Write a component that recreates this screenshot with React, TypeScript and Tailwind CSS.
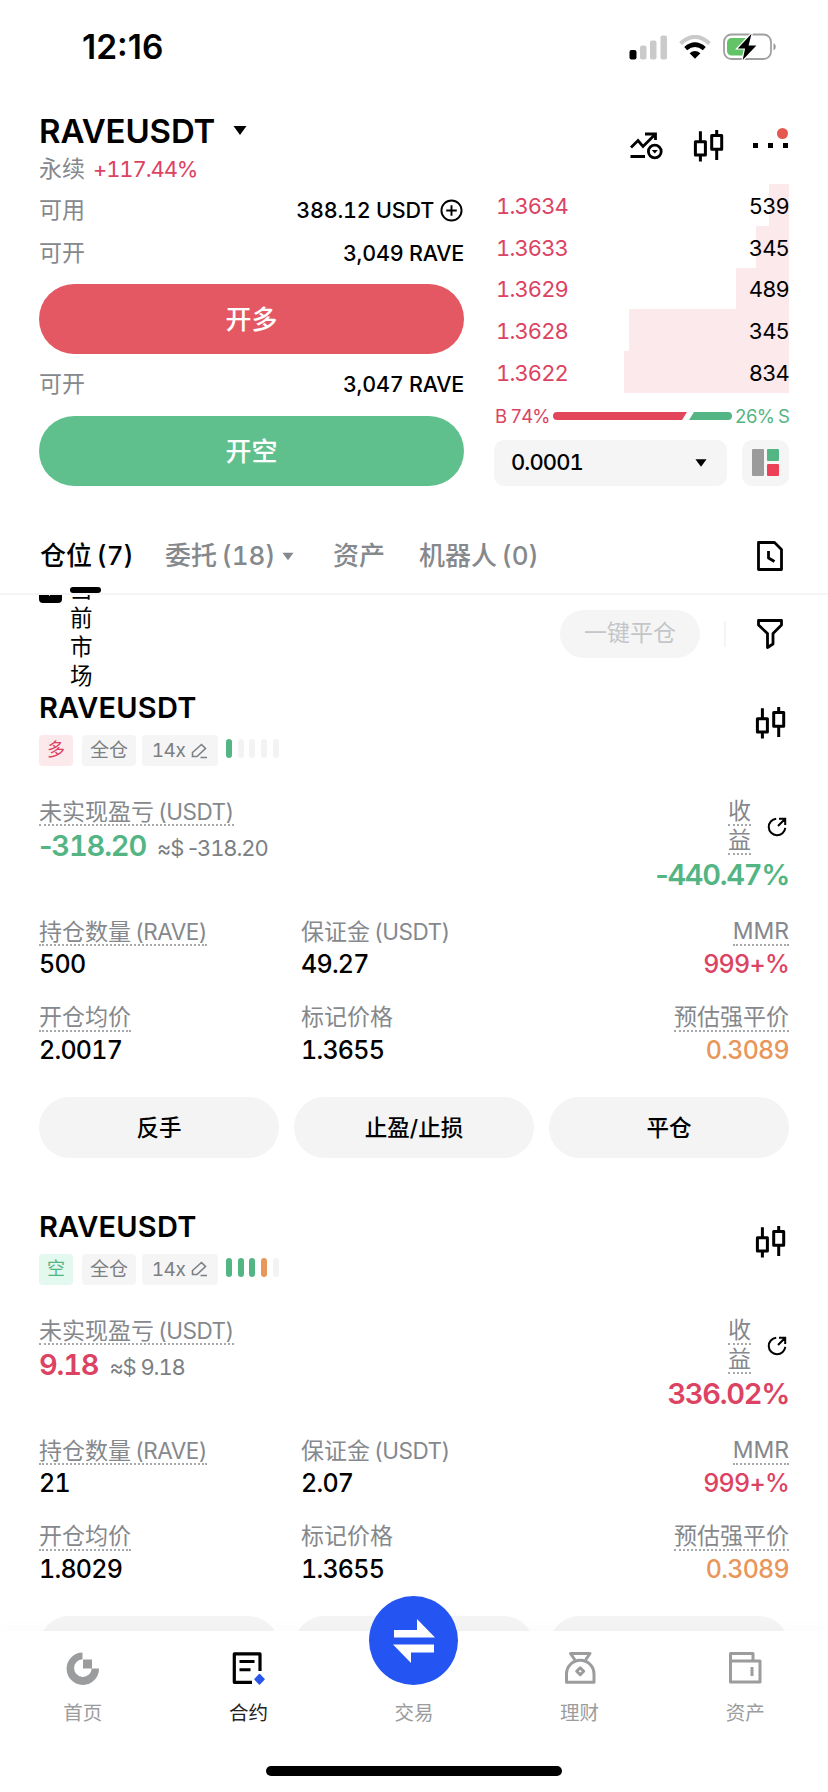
import React from 'react';
import clsx from 'clsx';

interface Position {
    side: 'long' | 'short';
    risk: string[];
    pnl: string;
    roi: string;
    size: string;
    margin: string;
    entry: string;
}

const positions: Position[] = [
    {
        side: 'long',
        risk: ['bg-[#54b584]', 'bg-[#f3f3f4]', 'bg-[#f3f3f4]', 'bg-[#f3f3f4]', 'bg-[#f3f3f4]'],
        pnl: '-318.20', roi: '-440.47%', size: '500', margin: '49.27', entry: '2.0017',
    },
    {
        side: 'short',
        risk: ['bg-[#54b584]', 'bg-[#54b584]', 'bg-[#54b584]', 'bg-[#e9965a]', 'bg-[#f3f3f4]'],
        pnl: '9.18', roi: '336.02%', size: '21', margin: '2.07', entry: '1.8029',
    },
];

const asks = [
    { price: '1.3634', qty: '539', depth: 20 },
    { price: '1.3633', qty: '345', depth: 33 },
    { price: '1.3629', qty: '489', depth: 53 },
    { price: '1.3628', qty: '345', depth: 160 },
    { price: '1.3622', qty: '834', depth: 165 },
];

const Caret = ({ className }: { className?: string }) => (
    <svg viewBox="0 0 14 9" className={className} fill="currentColor"><path d="M0.5 0h13L7 9z" /></svg>
);

const CandleIcon = () => (
    <svg width="32" height="32" viewBox="0 0 32 32" fill="none" stroke="#000" strokeWidth="3" strokeLinejoin="round">
        <rect x="2.4" y="11.8" width="10" height="13.2" />
        <path d="M7.4 1.3v10.500M7.400 25v6.500" />
        <rect x="18.7" y="5.5" width="10" height="13.8" />
        <path d="M23.700 0v5.500M23.700 19.300V30" />
    </svg>
);

// Inter's tabular minus is as wide as a digit, so the sign keeps its own width
const Signed = ({ value }: { value: string }) => (
    value.startsWith('-')
        ? <><span className="proportional-nums">-</span>{value.slice(1)}</>
        : <>{value}</>
);

const StatusBar = () => (
    <div className="h-[94px] pl-[82px] pr-[51px] flex items-center justify-between">
        <span className="pt-[2px] text-[33.5px] leading-none font-semibold proportional-nums">12:16</span>
        <div className="flex items-center">
            <svg width="39" height="26" viewBox="0 0 39 26">
                <rect x="0.5" y="16" width="7" height="9.5" rx="2" fill="#000" />
                <rect x="11" y="11.5" width="6.5" height="14" rx="2" fill="#cacaca" />
                <rect x="21" y="6.5" width="6.5" height="19" rx="2" fill="#cacaca" />
                <rect x="31.5" y="1.5" width="6.5" height="24" rx="2" fill="#cacaca" />
            </svg>
            <svg width="32" height="24" viewBox="0 0 32 24" className="ml-[11px]" fill="none">
                <path d="M1.5 8.4Q16 -4.6 30.5 8.4" stroke="#cacaca" strokeWidth="4" />
                <path d="M6.7 13.6Q16 5.6 25.3 13.6" stroke="#000" strokeWidth="4.4" />
                <path d="M10.6 18.2Q16 13.6 21.4 18.2L16 23.7z" fill="#000" />
            </svg>
            <svg width="54" height="28" viewBox="0 0 54 28" className="ml-[12px]">
                <rect x="1" y="1.5" width="47" height="24.5" rx="7.5" fill="#fff" stroke="#a0a0a0" strokeWidth="1.8" />
                <path d="M8.5 5H26v17.5H8.5a4.500 4.500 0 0 1-4.500-4.500V9.500A4.500 4.500 0 0 1 8.500 5z" fill="#62c466" />
                <path d="M50.500 10.300c3 1 3 6 0 7z" fill="#9a9a9a" />
                <path d="M28.500 0.800L14.800 15.400h7.300L19.700 27 33.400 12.400h-7.800z" fill="#000" stroke="#fff" strokeWidth="2.400" paintOrder="stroke" />
            </svg>
        </div>
    </div>
);

const Header = () => (
    <div className="h-[90px] pl-[39px] pr-[40px] flex justify-between">
        <div>
            <div className="h-[53px] pt-[20px] flex items-center">
                <h1 className="text-[33px] leading-[34px] font-semibold tracking-[-0.15px]">RAVEUSDT</h1>
                <Caret className="w-[14px] h-[9px] ml-[18px]" />
            </div>
            <div className="mt-[5px] h-[34px] flex items-center text-[23px] text-[#85888c]">
                <span>永续</span>
                <span className="ml-[8px] text-[22px] tracking-[-0.05em] text-[#dc4363]">+117.44%</span>
            </div>
        </div>
        <div className="flex items-start pt-[36px]">
            <svg width="34" height="30" viewBox="0 0 34 30" className="mt-px" fill="none" stroke="#000" strokeWidth="2.8">
                <path d="M2 16.5L9 9.5l5 6L26 3.5M16 3h10.5v6M1.5 25.5h14.5" />
                <circle cx="25.8" cy="20.5" r="6.4" />
                <path d="M22.8 19h6l-3 3.5z" fill="#000" stroke="none" />
            </svg>
            <div className="ml-[30px]"><CandleIcon /></div>
            <div className="relative ml-[28px] mt-[13px] w-[35px] h-[5px] flex justify-between">
                <i className="size-[5px] bg-black" />
                <i className="size-[5px] bg-black" />
                <i className="size-[5px] bg-black" />
                <i className="absolute -top-[15px] right-0 size-[11px] rounded-full bg-[#e4584f]" />
            </div>
        </div>
    </div>
);

const Row = ({ label, children }: { label: string; children: React.ReactNode }) => (
    <div className="flex items-center justify-between text-[23px] h-full">
        <span className="text-[#85888c]">{label}</span>
        <span className="flex items-center text-[21.5px] font-medium tracking-[-0.2px]">{children}</span>
    </div>
);

const OrderPanel = () => (
    <div className="w-[425px]">
        <div className="h-[47px] pt-[5px]">
            <Row label="可用">
                388.12 USDT
                <svg width="23" height="23" viewBox="0 0 24 24" className="ml-[6px] mr-px" fill="none" stroke="#000" strokeWidth="2">
                    <circle cx="12" cy="12" r="10.5" />
                    <path d="M12 6.5v11M6.5 12h11" />
                </svg>
            </Row>
        </div>
        <div className="h-[45px]"><Row label="可开">3,049 RAVE</Row></div>
        <button className="block mt-[8px] w-full h-[70px] rounded-full bg-[#e45863] text-white text-[26px] font-medium">开多</button>
        <div className="h-[62px] pb-px"><Row label="可开">3,047 RAVE</Row></div>
        <button className="block w-full h-[70px] rounded-full bg-[#60c08d] text-white text-[26px] font-medium">开空</button>
    </div>
);

const OrderBook = () => (
    <div className="w-[295px]">
        {asks.map(a => (
            <div key={a.price} className="h-[41.8px] pt-[3px] relative flex items-center justify-between text-[22px] tracking-[-0.04em]">
                <div className="absolute right-0 inset-y-0 bg-[#fbe9ec]" style={{ width: a.depth }} />
                <span className="ml-[2px] text-[#dc4363]">{a.price}</span>
                <span className="relative">{a.qty}</span>
            </div>
        ))}
        <div className="h-[47px] flex items-center text-[18.5px] tracking-[-0.05em]">
            <span className="ml-[1px] w-[58px] text-[#dc4363] whitespace-nowrap">B 74%</span>
            <svg width="179" height="8" viewBox="0 0 179 8">
                <path d="M4 0H134L129 8H4a4 4 0 0 1 0-8z" fill="#e3465a" />
                <path d="M141 0H175a4 4 0 0 1 0 8H136z" fill="#54b584" />
            </svg>
            <span className="flex-1 text-right text-[#54b584] whitespace-nowrap">26% S</span>
        </div>
        <div className="flex justify-between h-[46px]">
            <div className="w-[233px] rounded-[10px] bg-[#f5f5f5] flex items-center justify-between pl-[17px] pr-[20px]">
                <span className="text-[22px] font-medium tracking-[-0.04em]">0.0001</span>
                <Caret className="w-[12px] h-[8px]" />
            </div>
            <div className="w-[47px] rounded-[10px] bg-[#f5f5f5] flex items-center justify-center">
                <div className="flex gap-[3px] h-[27px]">
                    <div className="w-[12px] rounded-[1px] bg-[#9b9b9b]" />
                    <div className="w-[12px] flex flex-col gap-[3px]">
                        <div className="h-[12px] rounded-[1px] bg-[#54b584]" />
                        <div className="h-[12px] rounded-[1px] bg-[#ec4058]" />
                    </div>
                </div>
            </div>
        </div>
    </div>
);

const Tabs = () => (
    <div className="h-[74px] pl-[40px] pr-[44px] border-b-2 border-[#f5f5f5] flex items-start justify-between">
        <div className="flex text-[26px] leading-[38px] font-medium text-[#85888c] pt-[16px] whitespace-nowrap [word-spacing:-2.5px]">
            <div className="w-[125px] text-black">
                仓位 (7)
                <div className="relative top-[12px] ml-[30px] w-[31px] h-[6px] rounded-full bg-black z-10" />
            </div>
            <div className="w-[168px] flex items-center h-[38px]">委托 (18)<Caret className="ml-[6px] w-[12px] h-[9px]" /></div>
            <div className="w-[86px]">资产</div>
            <div>机器人 (0)</div>
        </div>
        <svg width="28" height="32" viewBox="0 0 28 32" className="mt-[19px]" fill="none" stroke="#000" strokeWidth="2.8" strokeLinejoin="round">
            <path d="M2.5 2.5H18.5L25.5 9.5V29.5H2.5z" />
            <path d="M12.5 11v7l6 3.5" />
        </svg>
    </div>
);

const Filters = () => (
    <div className="-mt-[21px] h-[119px] pl-[39px] pr-[44px] flex items-center">
        <div className="w-[23px] h-[23px] self-start mt-[6px] rounded-[4px] bg-black">
            <svg viewBox="0 0 23 23" fill="none" stroke="#fff" strokeWidth="2.5"><path d="M5 8l5.500 6L18 5" /></svg>
        </div>
        <div className="self-start ml-[8px] w-[23px] text-[22.5px] leading-[29px] break-all">当前市场</div>
        <button className="ml-auto w-[140px] h-[48px] rounded-full bg-[#f5f5f5] text-[23px] text-[#c3c5c8]">一键平仓</button>
        <div className="ml-[24px] w-[2px] h-[26px] bg-[#f5f5f5]" />
        <svg width="28" height="32" viewBox="0 0 28 32" className="ml-[30px]" fill="none" stroke="#000" strokeWidth="2.8" strokeLinejoin="round">
            <path d="M2.5 2.5h23v4.5l-8.5 8.5v10.5l-5.5 3.5v-14L2.5 7z" />
        </svg>
    </div>
);

const dotted = 'border-b-2 border-dotted border-[#a6a9ac]';

interface FieldLabelProps { text: string; unit?: string; underline?: boolean; }

const FieldLabel = ({ text, unit, underline }: FieldLabelProps) => (
    <div className={clsx('h-[27px] leading-[25px] text-[23px] text-[#85888c] whitespace-nowrap', underline && dotted)}>
        {text}
        {unit && <span className="ml-[4px] text-[22.5px] tracking-[-0.5px]">({unit})</span>}
    </div>
);

interface StatProps extends FieldLabelProps { value: string; right?: boolean; color?: string; }

const Stat = ({ value, right, color, ...label }: StatProps) => (
    <div className={clsx('h-[86px] flex flex-col', right ? 'items-end' : 'items-start')}>
        <FieldLabel {...label} />
        <div className={clsx('mt-[2px] h-[32px] leading-[32px] text-[25px] font-medium tracking-[-0.03em]', color)}>{value}</div>
    </div>
);

const PositionCard = ({ p }: { p: Position }) => {
    const tone = p.pnl.startsWith('-') ? 'text-[#54b584]' : 'text-[#dc4363]';
    return (
        <div className="h-[518.5px] px-[39px]">
            <div className="h-[109px] flex justify-between">
                <div>
                    <h2 className="h-[45px] leading-[36px] text-[29px] font-semibold tracking-[0.2px]">RAVEUSDT</h2>
                    <div className="flex text-[19px] h-[31px] leading-[31px] text-[#7c7f83]">
                        <span className={clsx('w-[34px] rounded-[4px] text-center text-[18px] leading-[29px]', p.side === 'long' ? 'bg-[#fce9ec] text-[#dc4363]' : 'bg-[#e3f8ee] text-[#54b584]')}>
                            {p.side === 'long' ? '多' : '空'}
                        </span>
                        <span className="ml-[9px] w-[54px] rounded-[4px] bg-[#f5f5f5] text-center">全仓</span>
                        <span className="ml-[6px] w-[76px] rounded-[4px] bg-[#f5f5f5] flex items-center justify-center tracking-[-0.5px]">
                            14x
                            <svg width="17" height="16" viewBox="0 0 17 16" className="ml-[6px]" fill="none" stroke="#7c7f83" strokeWidth="1.6">
                                <path d="M1.500 13.500V9.500L10.500 1.500l4 4L6 13.500zM9.500 14.500H16" />
                            </svg>
                        </span>
                        <span className="ml-[8px] mt-[4px] flex gap-[5.7px]">
                            {p.risk.map((c, i) => <i key={i} className={clsx('w-[6px] h-[19px] rounded-full', c)} />)}
                        </span>
                    </div>
                </div>
                <div className="mt-[17px] mr-[2px]"><CandleIcon /></div>
            </div>

            <div className="h-[120px] flex justify-between">
                <div className="flex flex-col items-start">
                    <FieldLabel text="未实现盈亏" unit="USDT" underline />
                    <div className="mt-px h-[38px] flex items-baseline leading-[38px]">
                        <span className={clsx('text-[29px] font-semibold tracking-[-0.04em]', tone)}><Signed value={p.pnl} /></span>
                        <span className="ml-[11px] text-[22px] tracking-[-0.05em] text-[#7c7f83]">≈$ <Signed value={p.pnl} /></span>
                    </div>
                </div>
                <div className="flex flex-col items-end">
                    <div className="flex items-center pr-[2px]">
                        <div className="w-[23px]">
                            <FieldLabel text="收" underline />
                            <div className="h-[2px]" />
                            <FieldLabel text="益" underline />
                        </div>
                        <svg width="20" height="20" viewBox="0 0 20 20" className="ml-[16px]" fill="none" stroke="#000" strokeWidth="2">
                            <path d="M9.2 1.7A8.3 8.3 0 1 0 18.3 10.8M12 1.8h6.2V8M18 2l-7 7" />
                        </svg>
                    </div>
                    <div className={clsx('mt-px h-[38px] leading-[38px] text-[29px] font-semibold tracking-[-0.045em]', tone)}><Signed value={p.roi} /></div>
                </div>
            </div>

            <div className="grid grid-cols-[262px_1fr_1fr]">
                <Stat text="持仓数量" unit="RAVE" value={p.size} underline />
                <Stat text="保证金" unit="USDT" value={p.margin} />
                <Stat text="MMR" value="999+%" underline right color="text-[#dc4363]" />
                <Stat text="开仓均价" value={p.entry} underline />
                <Stat text="标记价格" value="1.3655" />
                <Stat text="预估强平价" value="0.3089" underline right color="text-[#e9965a]" />
            </div>

            <div className="mt-[6px] grid grid-cols-3 gap-[15px]">
                {['反手', '止盈/止损', '平仓'].map(t => (
                    <button key={t} className="h-[61px] rounded-full bg-[#f4f4f4] text-[22.5px] font-medium">{t}</button>
                ))}
            </div>
        </div>
    );
};

const navItems = [
    {
        label: '首页',
        icon: (
            <svg width="34" height="34" viewBox="0 0 34 34">
                <path d="M16.500 1.500v6.800a8.800 8.800 0 1 0 9.200 9.200H33A16.200 16.200 0 1 1 16.500 1.500z" fill="#9b9c9e" />
                <rect x="17" y="8.5" width="9" height="9" fill="#9b9c9e" />
            </svg>
        ),
    },
    {
        label: '合约',
        icon: (
            <svg width="34" height="34" viewBox="0 0 34 34" fill="none" stroke="#000" strokeWidth="3.2">
                <path d="M29 20V2.9H3.3V31.3H21" strokeLinejoin="round" />
                <path d="M8.5 10.5h15M8.5 18.7h11" strokeWidth="3" />
                <path d="M28.5 23.500l4.500 4.700-4.500 4.700-4.500-4.700z" fill="#2a56ea" stroke="#2a56ea" strokeWidth="1.5" strokeLinejoin="round" />
            </svg>
        ),
    },
    { label: '交易', icon: null },
    {
        label: '理财',
        icon: (
            <svg width="34" height="34" viewBox="0 0 34 34" fill="none" stroke="#9b9c9e" strokeWidth="3" strokeLinejoin="round">
                <path d="M12 9L7.5 2.5H27L22.500 9" />
                <path d="M3.500 31.300V23A13.700 13.700 0 0 1 31 23V31.300z" />
                <path d="M17.200 16.800l3.500 3.500-3.500 3.500-3.500-3.500z" />
            </svg>
        ),
    },
    {
        label: '资产',
        icon: (
            <svg width="34" height="34" viewBox="0 0 34 34" fill="none" stroke="#9b9c9e" strokeWidth="3" strokeLinejoin="round">
                <path d="M2.5 10V2.5H25V10" />
                <path d="M2.5 10H32V31H2.5z" />
                <path d="M24 16v9" />
            </svg>
        ),
    },
];

const BottomNav = () => (
    <div className="relative h-[161px] bg-white shadow-[0_-4px_14px_rgba(0,0,0,0.02)]">
        <div className="grid grid-cols-5 h-[97px]">
            {navItems.map(n => (
                <div key={n.label} className="flex flex-col items-center">
                    <div className="h-[67px] pt-[20px]">
                        {n.icon ?? (
                            <div className="-mt-[55px] size-[89px] rounded-full bg-[#2455f3] flex items-center justify-center">
                                <svg width="42" height="44" viewBox="0 0 42 44" fill="#fff">
                                    <path d="M1 11h23V0L42 18.500H1zM41 25.500v8H18V44L0 25.500z" />
                                </svg>
                            </div>
                        )}
                    </div>
                    <span className={clsx('text-[19.5px] leading-[30px]', n.label === '合约' ? 'text-[#222]' : 'text-[#9b9c9e]')}>{n.label}</span>
                </div>
            ))}
        </div>
        <div className="mt-[38px] mx-auto w-[296px] h-[10px] rounded-full bg-black" />
    </div>
);

export default function App() {
    return (
        <div className="w-[828px] h-[1792px] flex flex-col overflow-hidden bg-white text-black tabular-nums font-['Inter','Noto_Sans_CJK_SC',sans-serif]">
            <StatusBar />
            <Header />
            <div className="h-[337px] pl-[39px] pr-[39px] flex justify-between">
                <OrderPanel />
                <OrderBook />
            </div>
            <Tabs />
            <div className="h-[1036px] overflow-hidden">
                <Filters />
                <div className="-mt-[3px]">
                    {positions.map(p => <PositionCard key={p.side} p={p} />)}
                </div>
            </div>
            <BottomNav />
        </div>
    );
}
